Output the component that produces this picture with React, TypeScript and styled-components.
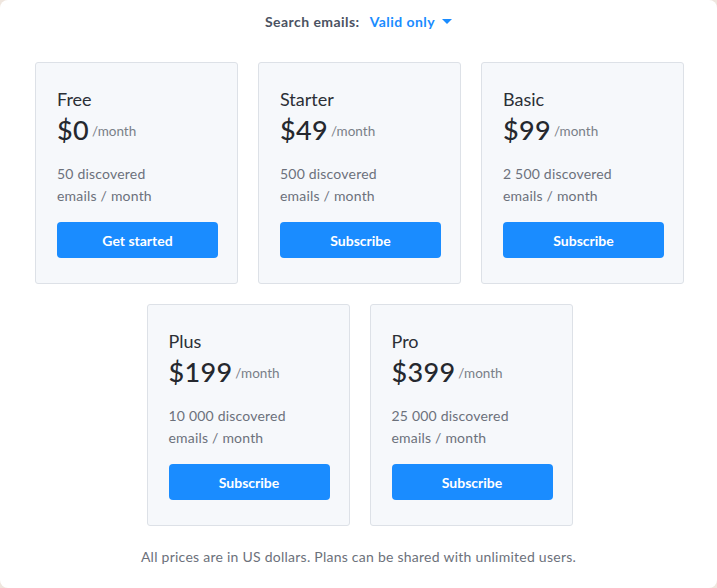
import React from "react";
import styled, { createGlobalStyle } from "styled-components";

const Global = createGlobalStyle`
  html, body { margin: 0; padding: 0; background: #efe6de; }
  body { font-family: Lato, "Open Sans", sans-serif; -webkit-font-smoothing: antialiased; }
  * { box-sizing: border-box; }
`;

const Modal = styled.div`
  width: 717px;
  height: 588px;
  background: #ffffff;
  border-radius: 8px;
  display: flex;
  flex-direction: column;
  align-items: center;
  padding-top: 11px;
`;

const Filter = styled.div`
  display: flex;
  align-items: center;
  gap: 10px;
  font-size: 14px;
  font-weight: 700;
  height: 20px;
  color: #4b5262;
  letter-spacing: 0.45px;
`;

const Dropdown = styled.span`
  display: inline-flex;
  align-items: center;
  gap: 7px;
  color: #1a8cff;
  font-weight: 700;
`;

const Caret = styled.span`
  width: 0;
  height: 0;
  border-left: 5px solid transparent;
  border-right: 5px solid transparent;
  border-top: 5px solid #1a8cff;
`;

const Plans = styled.div`
  margin-top: 31px;
  margin-left: 2px;
  width: 649px;
  display: flex;
  flex-wrap: wrap;
  justify-content: center;
  gap: 20px 20px;
`;

const Card = styled.div`
  width: 203px;
  height: 222px;
  background: #f6f8fb;
  border: 1px solid #dde1e7;
  border-radius: 3px;
  padding: 25px 20px 0 21px;
  display: flex;
  flex-direction: column;
`;

const Name = styled.div`
  font-size: 18px;
  line-height: 22px;
  color: #2b2f36;
`;

const PriceRow = styled.div`
  display: flex;
  align-items: center;
  gap: 3px;
  margin-top: 3px;
  height: 34px;
`;

const Price = styled.span`
  font-size: 27px;
  line-height: 34px;
  font-weight: 500;
  color: #25282e;
  letter-spacing: 0.3px;
`;

const Per = styled.span`
  font-size: 13.5px;
  line-height: 16px;
  margin-top: 2px;
  color: #7a7f88;
`;

const Desc = styled.div`
  margin-top: 16px;
  font-size: 14px;
  line-height: 22px;
  color: #6c717b;
  letter-spacing: 0.2px;
`;

const Button = styled.button`
  margin-top: 15px;
  width: 161px;
  height: 36px;
  border: none;
  border-radius: 4px;
  background: #1a8cff;
  color: #ffffff;
  font-family: Lato, sans-serif;
  font-size: 14px;
  font-weight: 700;
  cursor: pointer;
`;

const Footer = styled.div`
  margin-top: 22px;
  font-size: 14px;
  letter-spacing: 0.25px;
  color: #6c717b;
`;

const plans = [
  { name: "Free", price: "$0", desc: "50 discovered", cta: "Get started" },
  { name: "Starter", price: "$49", desc: "500 discovered", cta: "Subscribe" },
  { name: "Basic", price: "$99", desc: "2 500 discovered", cta: "Subscribe" },
  { name: "Plus", price: "$199", desc: "10 000 discovered", cta: "Subscribe" },
  { name: "Pro", price: "$399", desc: "25 000 discovered", cta: "Subscribe" },
];

export default function App() {
  return (
    <>
      <Global />
      <Modal>
        <Filter>
          Search emails:
          <Dropdown>
            Valid only <Caret />
          </Dropdown>
        </Filter>
        <Plans>
          {plans.map((p) => (
            <Card key={p.name}>
              <Name>{p.name}</Name>
              <PriceRow>
                <Price>{p.price}</Price>
                <Per>/month</Per>
              </PriceRow>
              <Desc>
                {p.desc}
                <br />
                emails / month
              </Desc>
              <Button>{p.cta}</Button>
            </Card>
          ))}
        </Plans>
        <Footer>All prices are in US dollars. Plans can be shared with unlimited users.</Footer>
      </Modal>
    </>
  );
}
